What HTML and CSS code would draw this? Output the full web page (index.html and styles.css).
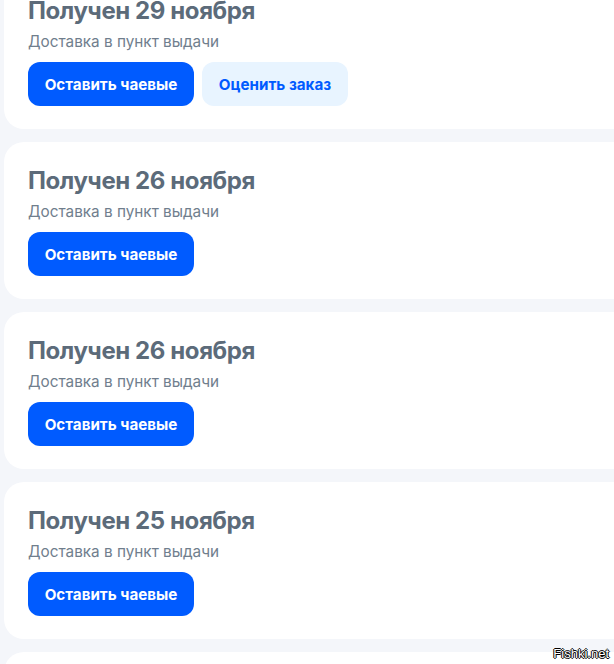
FILE: index.html
```html
<!DOCTYPE html>
<html lang="ru">
<head>
<meta charset="utf-8">
<link rel="stylesheet" href="styles.css">
</head>
<body>
<div class="list">
  <section class="card">
    <h2 class="title">Получен 29 ноября</h2>
    <p class="sub">Доставка в пункт выдачи</p>
    <div class="actions">
      <button class="btn btn-primary">Оставить чаевые</button>
      <button class="btn btn-light">Оценить заказ</button>
    </div>
  </section>
  <section class="card">
    <h2 class="title">Получен 26 ноября</h2>
    <p class="sub">Доставка в пункт выдачи</p>
    <div class="actions">
      <button class="btn btn-primary">Оставить чаевые</button>
    </div>
  </section>
  <section class="card">
    <h2 class="title">Получен 26 ноября</h2>
    <p class="sub">Доставка в пункт выдачи</p>
    <div class="actions">
      <button class="btn btn-primary">Оставить чаевые</button>
    </div>
  </section>
  <section class="card">
    <h2 class="title">Получен 25 ноября</h2>
    <p class="sub">Доставка в пункт выдачи</p>
    <div class="actions">
      <button class="btn btn-primary">Оставить чаевые</button>
    </div>
  </section>
  <section class="card"></section>
</div>
<div class="watermark">Fishki.net</div>
</body>
</html>
```
FILE: styles.css
```css
html, body {
  margin: 0;
  padding: 0;
  overflow: hidden;
}
body {
  background: #f4f6fa;
  font-family: Inter, "Noto Sans", sans-serif;
  width: 614px;
  height: 664px;
  position: relative;
}
.list {
  display: flex;
  flex-direction: column;
  gap: 13px;
  margin-top: -28px;
  padding-left: 4px;
  width: 660px;
}
.card {
  background: #ffffff;
  border-radius: 20px;
  height: 157px;
  box-sizing: border-box;
  padding: 24px 24px 0 24px;
}
.title {
  margin: 0;
  font-size: 24px;
  line-height: 30px;
  font-weight: 700;
  color: #5c6b7a;
  letter-spacing: -0.4px;
}
.sub {
  margin: 6px 0 0 0;
  font-size: 15.3px;
  line-height: 20px;
  color: #707e8d;
}
.actions {
  display: flex;
  gap: 8px;
  margin-top: 10px;
}
.btn {
  height: 44px;
  border: none;
  border-radius: 12px;
  font-family: inherit;
  font-size: 15.2px;
  font-weight: 700;
  padding: 0 12px;
  cursor: pointer;
}
.btn-primary {
  background: #005bff;
  color: #ffffff;
  width: 166px;
}
.btn-light {
  background: #e8f4ff;
  color: #005bff;
  width: 146px;
}
.watermark {
  position: absolute;
  right: 5px;
  bottom: 3px;
  font-family: "Liberation Sans", Arial, sans-serif;
  font-size: 13px;
  color: #ffffff;
  text-shadow: -1px 0 #000, 1px 0 #000, 0 -1px #000, 0 1px #000;
}
```
